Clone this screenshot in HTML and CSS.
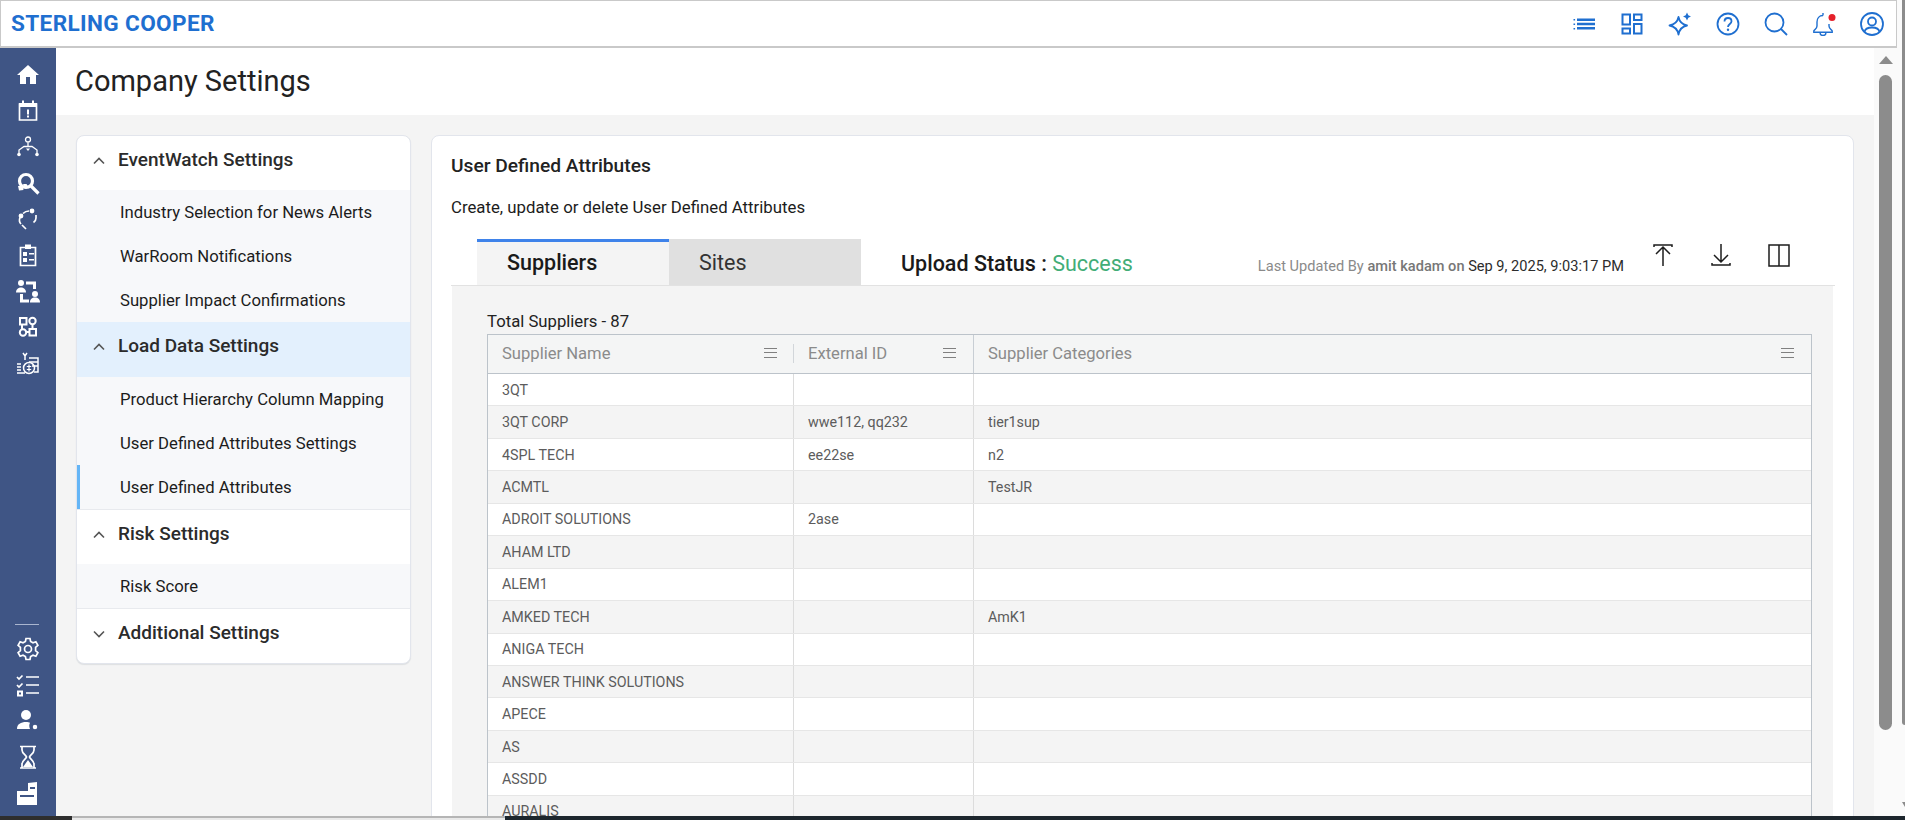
FILE: index.html
```html
<!DOCTYPE html>
<html lang="en">
<head>
<meta charset="utf-8">
<title>Company Settings</title>
<link rel="stylesheet" href="styles.css">
</head>
<body>
<div class="window">
  <div class="page">
    <header class="topbar">
      <div class="logo">STERLING COOPER</div>
      <nav class="top-icons">
        <svg class="ti" viewBox="0 0 24 24"><path class="f" d="M1.500 8.500h1.600V6.900H1.500zM1.500 13h1.600v-1.600H1.500zM1.500 17.500h1.600v-1.600H1.500zM5 9h18V6.500H5zM5 13.200h18v-2.400H5zM5 17.500h18V15H5z"/></svg>
        <svg class="ti" viewBox="0 0 24 24"><path class="f" fill-rule="evenodd" d="M1.500 1.500h9.500v12H1.500zM3.500 3.500v8H9v-8zM13 1.500h9.500V9H13zM15 3.500V7h5.500V3.500zM13 11h9.500v11.500H13zM15 13v7.500h5.500V13zM1.500 15.500H11v7H1.500zM3.500 17.500v3H9v-3z"/></svg>
        <svg class="ti" viewBox="0 0 24 24"><path class="s" d="M10.500 5C11.500 10 14 12.500 19 13.500 14 14.500 11.500 17 10.500 22.500 9.500 17 7 14.500 1.500 13.500 7 12.500 9.500 10 10.500 5z" stroke-linejoin="round"/><path class="f" d="M19 .5l1.300 2.700L23 4.500l-2.700 1.300L19 8.500l-1.300-2.700L15 4.500l2.700-1.300z"/></svg>
        <svg class="ti" viewBox="0 0 24 24"><circle class="s" cx="12" cy="12" r="10.500"/><path class="s" d="M8.500 9.500c0-2 1.500-3.500 3.500-3.500s3.500 1.500 3.500 3.300c0 2.700-3.500 2.700-3.500 5.700"/><circle class="f" cx="12" cy="17.800" r="1.200"/></svg>
        <svg class="ti" viewBox="0 0 24 24"><circle class="s" cx="10.500" cy="10.500" r="9"/><path class="s" d="M17 17l6 6"/></svg>
        <svg class="ti" viewBox="0 0 24 24"><path class="s thin" d="M11 1v2.500M11 3.500c-3.800 0-6 2.800-6 6.500v4c0 2.200-2 3.300-3.200 5v1.200h18.400V19c-1.200-1.700-3.200-2.800-3.200-5v-2M8 20.500c0 2 1.300 3 3 3s3-1 3-3"/><circle class="dot" cx="20" cy="5.500" r="3.500"/></svg>
        <svg class="ti" viewBox="0 0 24 24"><circle class="s" cx="12" cy="12" r="11"/><circle class="s" cx="12" cy="9.500" r="4"/><path class="s" d="M4.500 20c.5-3 3.500-4.500 7.500-4.500s7 1.500 7.500 4.500"/></svg>
      </nav>
    </header>
    <div class="shell">
      <aside class="rail">
        <div class="rail-group">
          <svg class="ri" viewBox="0 0 24 24"><path class="w" d="M10 21v-7h4v7h6v-9h3L12 2 1 12h3v9z"/></svg>
          <svg class="ri" viewBox="0 0 24 24"><path class="o" d="M3.500 5h17v16h-17z"/><path class="w" d="M3 4h18v4H3zM6 1.500h2V5H6zM16 1.500h2V5h-2zM11 10.500h2v5h-2zM11 16.500h2v2h-2z"/></svg>
          <svg class="ri" viewBox="0 0 24 24"><circle class="o thin" cx="12" cy="4.500" r="2.500"/><path class="o thin" d="M12 7.500v3.500M3 18v-3l5-3.500h8l5 3.500v3"/><circle class="w" cx="3" cy="19.500" r="1.800"/><circle class="w" cx="21" cy="19.500" r="1.800"/><path class="w" d="M10 13.500h4l-2 2.500z"/></svg>
          <svg class="ri" viewBox="0 0 24 24"><circle class="ob heavy" cx="10" cy="10" r="6.500"/><path class="ob heavy" d="M15 15l7.500 7.500"/><path class="w" d="M2 15l4.500-.5 1 4.500-4.500.5zM7 13h3.500l2 3-3.500 1.500z"/></svg>
          <svg class="ri" viewBox="0 0 24 24"><path class="o" d="M7 6.500c1.500-1.500 3-2.500 6-2.500M4 10.500c-1 2.500-.5 5 1 6.500M20 8v3c0 2-1 3.500-2.500 4.500M6 18l4 4"/><circle class="w" cx="16" cy="4" r="2.400"/><circle class="w" cx="5" cy="9" r="2.400"/></svg>
          <svg class="ri" viewBox="0 0 24 24"><path class="o" d="M4.500 4.500h15v18h-15z"/><path class="w" d="M9 1.500h6V6H9zM7 9h4v4H7zM13 10h5v1.500h-5zM7 15h4v4H7zM13 16h5v1.500h-5z"/></svg>
          <svg class="ri" viewBox="0 0 24 24"><circle class="w" cx="5" cy="4" r="3"/><path class="w" d="M0 13.500C0 10 2.500 8.500 5 8.500s5 1.500 5 5z"/><circle class="w" cx="19" cy="15" r="3"/><path class="w" d="M14 23.500c0-3.500 2-5 5-5s5 1.500 5 5zM10 2.500h10V10h-3V5.500h-7zM4 15h3v5.500h6v3H4z"/></svg>
          <svg class="ri" viewBox="0 0 24 24"><path class="ob" d="M4 3h6.500v6.500H4zM13.500 14H20v6.500h-6.500z"/><circle class="ob" cx="16.500" cy="6" r="3.200"/><circle class="ob" cx="7" cy="17.500" r="3.200"/><path class="ob" d="M6 9.500v4.500M16.500 9v5M10.200 17h3.300"/></svg>
          <svg class="ri" viewBox="0 0 24 24"><path class="o money" d="M7 2l2 3 2-3M9 5v4M13 7h9v14H18M13 11h9M16 15h6M5 13H1M5 16H1M5 19H1M1 22h8"/><circle class="o money" cx="13" cy="17" r="5.500"/><path class="w" d="M12.400 13.500h1.200v7h-1.200zM10.800 15h4.400v1h-4.400zM10.800 18h4.400v1h-4.400z"/></svg>
        </div>
        <div class="rail-group">
          <div class="rail-line"></div>
          <svg class="ri" viewBox="0 0 24 24"><circle class="o" cx="12" cy="12" r="3.500"/><path class="o" d="M10 1.500h4l.6 3 2.400 1.300 2.900-1 2 3.500-2.300 2v3.400l2.300 2-2 3.500-2.900-1-2.400 1.300-.6 3h-4l-.6-3L7 18.200l-2.900 1-2-3.500 2.300-2v-3.400l-2.300-2 2-3.500 2.900 1 2.400-1.300z"/></svg>
          <svg class="ri" viewBox="0 0 24 24"><path class="o" d="M10 4h13M10 12h13M10 20h13M1 4l2 2 3.500-3.500M1 12l2 2 3.500-3.500"/><path class="w" d="M1 17.500h6v6H1zm2 2v2h2v-2z" fill-rule="evenodd"/></svg>
          <svg class="ri" viewBox="0 0 24 24"><circle class="w" cx="10" cy="6" r="5"/><path class="w" d="M1 20c0-5 4-7 9-7 2 0 3 .3 4 .8-1 2-1 4 0 6.200z"/><circle class="gear" cx="19" cy="18" r="3"/></svg>
          <svg class="ri" viewBox="0 0 24 24"><path class="o" d="M4 1.500h16M4 23h16M6 2v3c0 3.500 4 5 4.500 7-.5 2-4.500 3.500-4.500 7v4M18 2v3c0 3.500-4 5-4.500 7 .5 2 4.500 3.500 4.500 7v4"/><path class="w" d="M12 15l5 7H7z"/></svg>
          <svg class="ri" viewBox="0 0 24 24"><path class="w" d="M12 2l9-1v23H1V10h11zM4 14v2h14v-2zM14 6v2h5V6z" fill-rule="evenodd"/></svg>
        </div>
      </aside>
      <main class="content">
        <h1 class="page-title">Company Settings</h1>
        <div class="settings">
          <section class="menu">
            <div class="sec"><svg class="chev" viewBox="0 0 12 8"><path d="M1 6.500l5-5 5 5"/></svg>EventWatch Settings</div>
            <div class="item">Industry Selection for News Alerts</div>
            <div class="item">WarRoom Notifications</div>
            <div class="item">Supplier Impact Confirmations</div>
            <div class="sec sec-active"><svg class="chev" viewBox="0 0 12 8"><path d="M1 6.500l5-5 5 5"/></svg>Load Data Settings</div>
            <div class="item">Product Hierarchy Column Mapping</div>
            <div class="item">User Defined Attributes Settings</div>
            <div class="item item-on item-last">User Defined Attributes</div>
            <div class="sec"><svg class="chev" viewBox="0 0 12 8"><path d="M1 6.500l5-5 5 5"/></svg>Risk Settings</div>
            <div class="item item-last">Risk Score</div>
            <div class="sec"><svg class="chev" viewBox="0 0 12 8"><path d="M1 1.500l5 5 5-5"/></svg>Additional Settings</div>
          </section>
          <section class="panel">
            <h2 class="panel-title">User Defined Attributes</h2>
            <p class="panel-sub">Create, update or delete User Defined Attributes</p>
            <div class="tabrow">
              <div class="tab tab-on">Suppliers</div>
              <div class="tab">Sites</div>
              <div class="status">Upload Status : <span class="ok">Success</span></div>
              <div class="updated">Last Updated By <b>amit kadam on</b> <span class="when">Sep 9, 2025, 9:03:17 PM</span></div>
              <div class="tools">
                <svg class="tool" viewBox="0 0 24 24"><path d="M3 4V2h18v2M12 23V4M5 11l7-7 7 7"/></svg>
                <svg class="tool" viewBox="0 0 24 24"><path d="M12 1v18M5 12l7 7 7-7M3 20v2h18v-2"/></svg>
                <svg class="tool" viewBox="0 0 24 24"><path d="M2 2h20v21H2zM12 2v21"/></svg>
              </div>
            </div>
            <div class="tabbody">
              <div class="total">Total Suppliers - 87</div>
              <div class="grid">
                <div class="row head">
                  <div class="cell">Supplier Name<span class="burger"></span></div>
                  <div class="cell">External ID<span class="burger"></span></div>
                  <div class="cell">Supplier Categories<span class="burger"></span></div>
                </div>
                <div class="row"><div class="cell">3QT</div><div class="cell"></div><div class="cell"></div></div>
                <div class="row"><div class="cell">3QT CORP</div><div class="cell">wwe112, qq232</div><div class="cell">tier1sup</div></div>
                <div class="row"><div class="cell">4SPL TECH</div><div class="cell">ee22se</div><div class="cell">n2</div></div>
                <div class="row"><div class="cell">ACMTL</div><div class="cell"></div><div class="cell">TestJR</div></div>
                <div class="row"><div class="cell">ADROIT SOLUTIONS</div><div class="cell">2ase</div><div class="cell"></div></div>
                <div class="row"><div class="cell">AHAM LTD</div><div class="cell"></div><div class="cell"></div></div>
                <div class="row"><div class="cell">ALEM1</div><div class="cell"></div><div class="cell"></div></div>
                <div class="row"><div class="cell">AMKED TECH</div><div class="cell"></div><div class="cell">AmK1</div></div>
                <div class="row"><div class="cell">ANIGA TECH</div><div class="cell"></div><div class="cell"></div></div>
                <div class="row"><div class="cell">ANSWER THINK SOLUTIONS</div><div class="cell"></div><div class="cell"></div></div>
                <div class="row"><div class="cell">APECE</div><div class="cell"></div><div class="cell"></div></div>
                <div class="row"><div class="cell">AS</div><div class="cell"></div><div class="cell"></div></div>
                <div class="row"><div class="cell">ASSDD</div><div class="cell"></div><div class="cell"></div></div>
                <div class="row"><div class="cell">AURALIS</div><div class="cell"></div><div class="cell"></div></div>
              </div>
            </div>
          </section>
        </div>
      </main>
      <div class="vscroll">
        <div class="vs-up"></div>
        <div class="vs-thumb"></div>
      </div>
    </div>
    </div>
  <div class="outer-scroll"><div class="outer-thumb"></div><div class="outer-arrow"></div></div>
</div>
<footer class="taskbar"><div class="tb-a"></div><div class="tb-b"></div><div class="tb-c"></div></footer>
</body>
</html>
```
FILE: styles.css
```css
* { box-sizing: border-box; }
html, body { margin: 0; height: 820px; overflow: hidden; background: #fff; }
body { font-family: Roboto, "Liberation Sans", sans-serif; color: #222; display: flex; flex-direction: column; }

.window { flex: 1; min-height: 0; display: flex; }
.page { width: 1897px; display: flex; flex-direction: column; min-height: 0; }

.topbar { height: 48px; flex: none; display: flex; align-items: center; justify-content: space-between; border: 1px solid #c9c9c9; border-bottom-width: 2px; background: #fff; padding: 0 12px 0 10px; }
.logo { font-size: 22.600px; font-weight: 700; color: #1f6fd0; letter-spacing: .35px; }
.top-icons { display: flex; gap: 24px; }
.ti { width: 24px; height: 24px; display: block; }
.ti .f { fill: #1f6fd0; }
.ti .s { fill: none; stroke: #1f6fd0; stroke-width: 1.8; }
.ti .thin { stroke-width: 1.400; }
.ti .dot { fill: #e5202a; }

.shell { flex: 1; min-height: 0; display: flex; }
.rail { width: 56px; flex: none; background: #3f5585; display: flex; flex-direction: column; justify-content: space-between; align-items: center; padding: 15px 0 11px; }
.rail-group { display: flex; flex-direction: column; align-items: center; gap: 12px; }
.ri { width: 24px; height: 24px; display: block; }
.ri .w { fill: #fff; }
.ri .o { fill: none; stroke: #fff; stroke-width: 1.7; }
.ri .thin { stroke-width: 1.300; }
.ri .money { stroke-width: 1.500; }
.ri .ob { fill: none; stroke: #fff; stroke-width: 2; }
.ri .heavy { stroke-width: 3.200; }
.ri .gear { fill: #fff; stroke: #3f5585; stroke-width: 1.500; }
.rail-line { width: 24px; height: 1px; background: #a9b5cf; margin: -1px 2px 0 0; }

.content { flex: 1; min-width: 0; display: flex; flex-direction: column; overflow: hidden; background: #f4f4f4; }
.page-title { margin: 0; height: 67px; flex: none; background: #fff; padding: 14px 0 0 19px; font-size: 29px; font-weight: 400; line-height: 38px; color: #222; }
.settings { flex: 1; min-height: 0; display: flex; align-items: flex-start; gap: 20px; padding: 20px 20px 0 20px; }

.menu { width: 335px; flex: none; background: #fff; border: 1px solid #e2e5ec; border-radius: 8px; overflow: hidden; box-shadow: 0 1px 1px rgba(60,70,90,.12); }
.sec { height: 54px; display: flex; align-items: flex-start; padding: 12px 0 0 16px; font-size: 19px; line-height: 24px; font-weight: 500; color: #2b2b2b; }
.sec-active { background: #e3f0fd; height: 55px; }
.chev { width: 12px; height: 8px; margin: 9px 13px 0 0; fill: none; stroke: #555; stroke-width: 1.6; flex: none; }
.item { height: 44px; background: #f7f8fa; padding: 1px 0 0 43px; font-size: 16.700px; line-height: 44px; color: #1c1c1c; }
.item-on { box-shadow: inset 3px 0 0 #64b5f6; }
.item-last { border-bottom: 1px solid #e8eaee; height: 45px; }

.panel { flex: 1; min-width: 0; height: 800px; background: #fff; border: 1px solid #e2e5ec; border-radius: 8px 8px 0 0; padding: 20px 20px 0 19px; }
.panel-title { margin: 0; font-size: 19.200px; font-weight: 500; line-height: 20px; color: #222; }
.panel-sub { margin: 21px 0 0; font-size: 16.800px; line-height: 20px; color: #1c1c1c; }
.tabrow { display: flex; align-items: stretch; height: 47px; margin: 22px -2px 0 0; padding-left: 26px; border-bottom: 1px solid #e2e2e2; }
.tab { width: 192px; background: #e0e0e0; font-size: 21.500px; line-height: 42px; padding: 3px 0 0 30px; color: #333; }
.tab-on { background: #f4f4f4; border-top: 3px solid #3f83ea; padding-top: 0; color: #1a1a1a; font-weight: 500; }
.status { margin-left: 40px; font-size: 21.500px; font-weight: 500; line-height: 49px; color: #1a1a1a; }
.ok { color: #42ad77; font-weight: 400; }
.updated { margin-left: auto; font-size: 14.600px; color: #8a8a8a; line-height: 48px; padding-top: 3px; }
.updated b { font-weight: 500; color: #777; }
.when { color: #2c2c2c; }
.tools { display: flex; gap: 34px; margin: 3px 44px 0 27px; }
.tool { width: 24px; height: 24px; margin-top: 1px; fill: none; stroke: #1d1d1d; stroke-width: 1.5; }

.tabbody { background: #f4f4f4; padding: 24px 21px 0 35px; margin-left: 1px; height: 600px; }
.total { font-size: 16.700px; line-height: 24px; color: #222; }
.grid { border: 1px solid #bcc3ca; border-bottom: 0; }
.row { display: grid; grid-template-columns: 306px 180px 1fr; height: 32.450px; background: #fff; border-bottom: 1px solid #e6e6e6; font-size: 14.300px; color: #5c5c5c; }
.row:nth-child(odd) { background: #f4f4f4; }
.row.head { height: 39px; background: #f4f5f5; border-bottom: 1px solid #bcc3ca; font-size: 16.600px; color: #8b8b8b; }
.cell { padding: 0 14px; display: flex; align-items: center; justify-content: space-between; border-right: 1px solid #dcdcdc; }
.cell:last-child { border-right: 0; }
.head .cell { position: relative; padding: 0 17px 2px 14px; border-right-color: #c8ced4; }
.head .cell:first-child { border-right: 0; }
.head .cell:first-child::after { content: ""; position: absolute; right: 0; top: 9px; height: 19px; border-right: 1px solid #d2d6da; }
.burger { width: 13px; height: 10px; border-top: 1.500px solid #808080; border-bottom: 1.500px solid #808080; position: relative; }
.burger::after { content: ""; position: absolute; left: 0; right: 0; top: 2.750px; border-top: 1.500px solid #808080; }

.vscroll { width: 23px; flex: none; background: #fafafa; padding: 8px 5px 0 5px; }
.vs-up { width: 0; height: 0; margin: 0 auto; border-left: 7.500px solid transparent; border-right: 7.500px solid transparent; border-bottom: 8px solid #8c8c8c; }
.vs-thumb { width: 13px; height: 655px; margin-top: 11px; background: #8c8c8c; border-radius: 7px; }

.outer-scroll { width: 8px; flex: none; background: #fafafa; padding-left: 5px; }
.outer-thumb { height: 725px; background: #8c8c8c; border-radius: 0 0 0 4px; }
.outer-arrow { margin-top: 77px; width: 0; height: 0; border-left: 3px solid transparent; border-top: 5px solid #8c8c8c; }

.taskbar { height: 4px; flex: none; display: flex; background: #1d262d; }
.tb-a { width: 72px; background: #2e2e2e; }
.tb-b { width: 433px; background: #e9e9e9; border-top: 2px solid #b5b5b5; }
.tb-c { flex: 1; }
```
